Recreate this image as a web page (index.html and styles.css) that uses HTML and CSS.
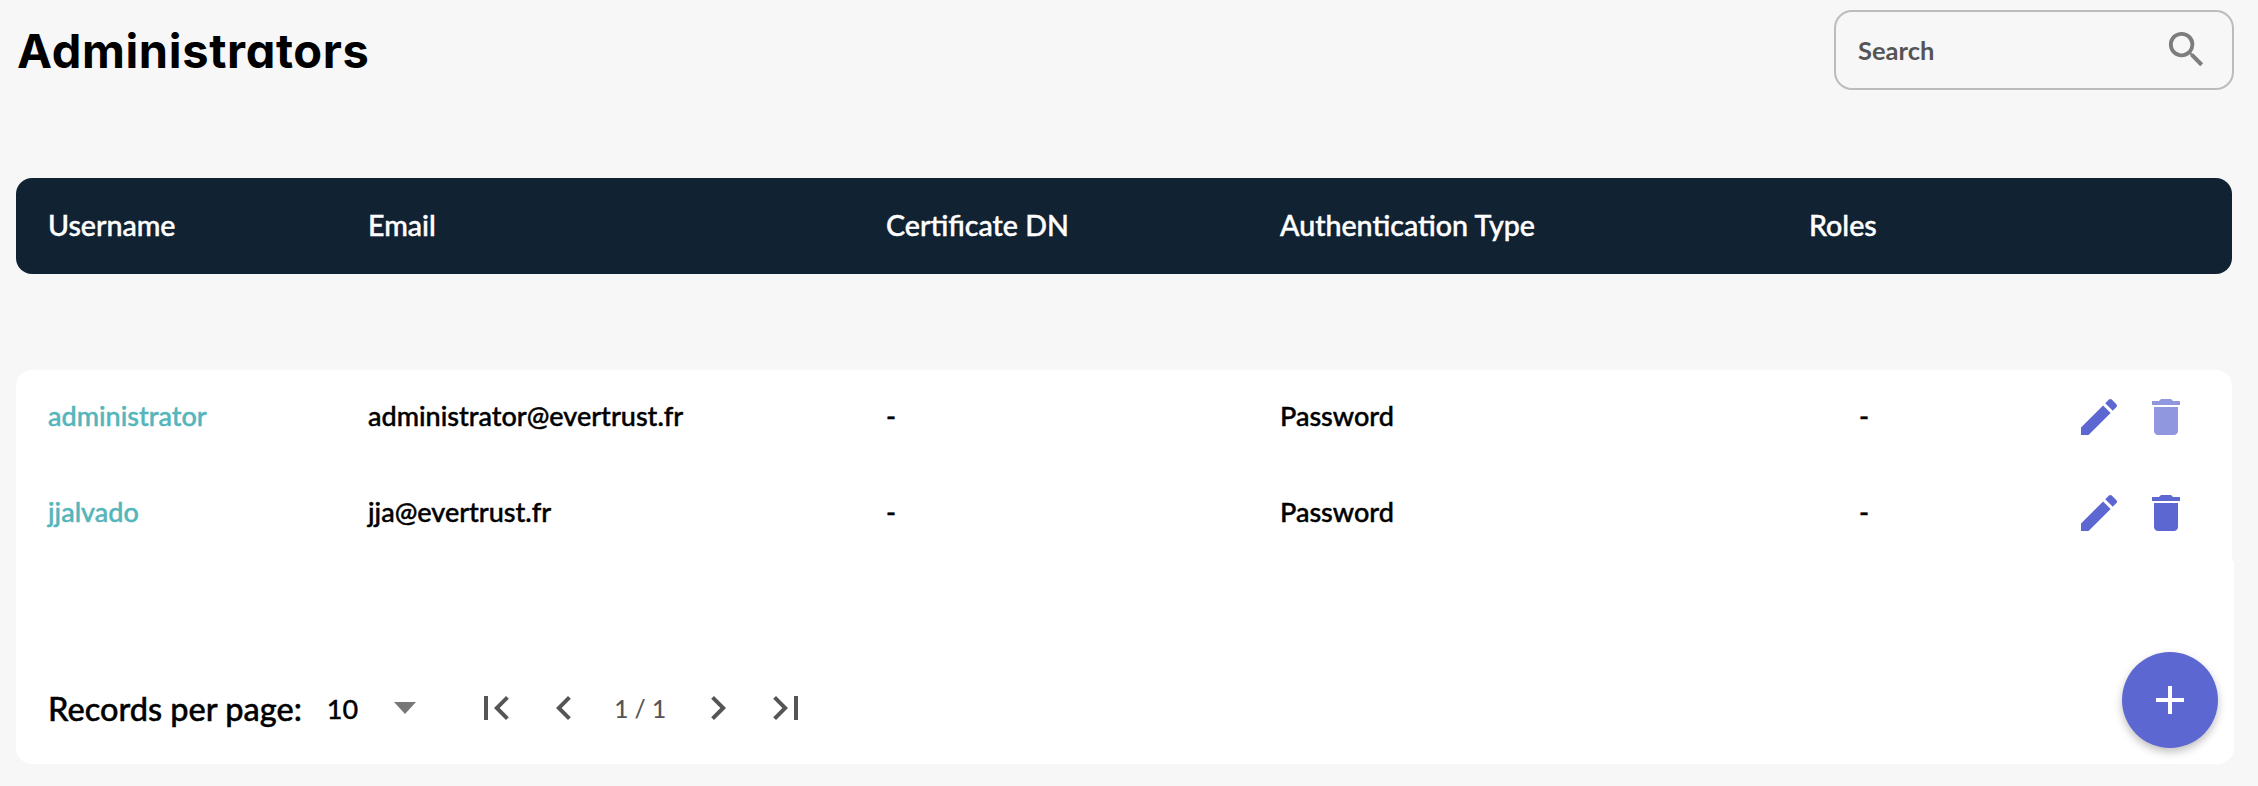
FILE: index.html
```html
<!DOCTYPE html>
<html lang="en">
<head>
<meta charset="utf-8">
<title>Administrators</title>
<link rel="stylesheet" href="styles.css">
</head>
<body>
<main class="page">
  <header class="top">
    <h1 class="title">Administrators</h1>
    <label class="search">
      <span class="search-label">Search</span>
      <svg class="search-icon" viewBox="0 0 24 24"><path d="M15.5 14h-.79l-.28-.27A6.47 6.47 0 0 0 16 9.5 6.5 6.5 0 1 0 9.5 16c1.61 0 3.09-.59 4.23-1.57l.27.28v.79l5 4.99L20.49 19l-4.99-5zm-6 0C7.01 14 5 11.99 5 9.5S7.01 5 9.5 5 14 7.01 14 9.5 11.99 14 9.5 14z"/></svg>
    </label>
  </header>

  <div class="row head">
    <div>Username</div>
    <div>Email</div>
    <div>Certificate DN</div>
    <div>Authentication Type</div>
    <div>Roles</div>
  </div>

  <section class="card">
    <div class="rows">
      <div class="row item">
        <a class="user">administrator</a>
        <div>administrator@evertrust.fr</div>
        <div>-</div>
        <div>Password</div>
        <div class="role">-</div>
        <div class="actions">
          <svg class="act" viewBox="0 0 24 24"><path d="M3 17.25V21h3.75L17.81 9.94l-3.75-3.75L3 17.25zM20.71 7.04a1 1 0 0 0 0-1.41l-2.34-2.34a1 1 0 0 0-1.41 0l-1.83 1.83 3.75 3.75 1.83-1.83z"/></svg>
          <svg class="act off" viewBox="0 0 24 24"><path d="M6 19c0 1.1.9 2 2 2h8c1.1 0 2-.9 2-2V7H6v12zM19 4h-3.5l-1-1h-5l-1 1H5v2h14V4z"/></svg>
        </div>
      </div>
      <div class="row item">
        <a class="user">jjalvado</a>
        <div>jja@evertrust.fr</div>
        <div>-</div>
        <div>Password</div>
        <div class="role">-</div>
        <div class="actions">
          <svg class="act" viewBox="0 0 24 24"><path d="M3 17.25V21h3.75L17.81 9.94l-3.75-3.75L3 17.25zM20.71 7.04a1 1 0 0 0 0-1.41l-2.34-2.34a1 1 0 0 0-1.41 0l-1.83 1.83 3.75 3.75 1.83-1.83z"/></svg>
          <svg class="act" viewBox="0 0 24 24"><path d="M6 19c0 1.1.9 2 2 2h8c1.1 0 2-.9 2-2V7H6v12zM19 4h-3.5l-1-1h-5l-1 1H5v2h14V4z"/></svg>
        </div>
      </div>
    </div>
    <footer class="pager">
      <span class="per">Records per page:</span>
      <span class="size">10</span>
      <span class="tri"></span>
      <nav class="nav">
        <svg class="pg" viewBox="0 0 24 24"><path d="M18.41 16.59 13.82 12l4.59-4.59L17 6l-6 6 6 6zM6 6h2v12H6z"/></svg>
        <svg class="pg" viewBox="0 0 24 24"><path d="M15.41 7.41 14 6l-6 6 6 6 1.41-1.41L10.83 12z"/></svg>
        <span class="count">1 / 1</span>
        <svg class="pg" viewBox="0 0 24 24"><path d="M10 6 8.59 7.41 13.17 12l-4.58 4.59L10 18l6-6z"/></svg>
        <svg class="pg" viewBox="0 0 24 24"><path d="M5.59 7.41 10.18 12l-4.59 4.59L7 18l6-6-6-6zM16 6h2v12h-2z"/></svg>
      </nav>
      <button class="fab" type="button" aria-label="Add">
        <svg viewBox="0 0 24 24"><path d="M19 13h-6v6h-2v-6H5v-2h6V5h2v6h6v2z"/></svg>
      </button>
    </footer>
  </section>
</main>
</body>
</html>
```
FILE: styles.css
```css
* { box-sizing: border-box; }
html, body { margin: 0; height: 100%; }
body {
  background: #f7f7f7;
  font-family: "Lato", "Liberation Sans", sans-serif;
  color: #000;
  overflow: hidden;
}
.page { padding: 10px 24px 0 16px; width: 2258px; }
.top { display: flex; justify-content: space-between; align-items: flex-start; height: 168px; }
.title {
  margin: 17px 0 0 1px;
  font-family: "Inter", "Liberation Sans", sans-serif;
  font-feature-settings: "cv11" 1;
  font-weight: 700;
  font-size: 47px;
  line-height: 48px;
  letter-spacing: .65px;
}
.search {
  width: 400px; height: 80px; margin-left: -2px; margin-right: 0;
  display: flex; align-items: center; justify-content: space-between;
  padding: 0 30px 0 22px;
  border: 2px solid #bcbcbc; border-radius: 18px;
}
.search-label { font-size: 25.5px; font-weight: 700; color: #555; }
.search-icon { width: 47px; height: 47px; fill: #7d7d7d; margin-top: -2px; margin-right: -8px; }

.row {
  display: grid;
  grid-template-columns: 320px 518px 394px 529px 1fr 150px;
  align-items: center;
}
.row > * { padding-left: 32px; }
.head {
  height: 96px; width: 2216px;
  background: #112233; color: #fff;
  border-radius: 16px;
  font-size: 28.6px; font-weight: 500;
  -webkit-text-stroke: .45px #fff;
  line-height: 32px; padding-bottom: 2px;
}
.card {
  margin-top: 96px; width: 2218px; height: 394px;
  display: flex; flex-direction: column;
}
.rows { width: 2216px; height: 191px; background: #fff; border-radius: 16px 16px 0 0; }
.item { height: 96px; font-size: 27px; font-weight: 500; -webkit-text-stroke: .45px; line-height: 32px; padding-bottom: 4px; }
.user { color: #54b5bb; }
.role { padding-left: 82px; }
.row > .actions { padding: 0; display: flex; align-items: center; gap: 19px; justify-content: flex-start; margin-left: -7px; margin-top: 2px; }
.act { width: 48px; height: 48px; fill: #5c67d1; }
.act.off { opacity: .68; }

.pager {
  flex: 1;
  display: flex; align-items: center;
  padding: 91px 16px 0 32px;
  background: #fff;
  border-radius: 0 0 16px 16px;
}
.per { font-size: 32.5px; font-weight: 500; -webkit-text-stroke: .45px; }
.size { font-size: 27px; font-weight: 500; -webkit-text-stroke: .3px; margin-left: 25px; }
.tri { width: 0; height: 0; margin-left: 36px; border: 11px solid transparent; border-top: 12px solid #777; border-bottom: 0; }
.nav { display: flex; align-items: center; margin-left: 56px; gap: 20px; }
.pg { width: 48px; height: 48px; fill: #555; }
.count { font-size: 24.5px; color: #555; font-weight: 500; padding: 0 8px 0 6px; }
.fab {
  margin-left: auto; margin-top: -16px;
  width: 96px; height: 96px; border: 0; border-radius: 50%; padding: 0;
  background: #5c67d1; display: flex; align-items: center; justify-content: center;
  box-shadow: 0 4px 8px rgba(0,0,0,.25);
}
.fab svg { width: 48px; height: 48px; fill: #fff; }
```
